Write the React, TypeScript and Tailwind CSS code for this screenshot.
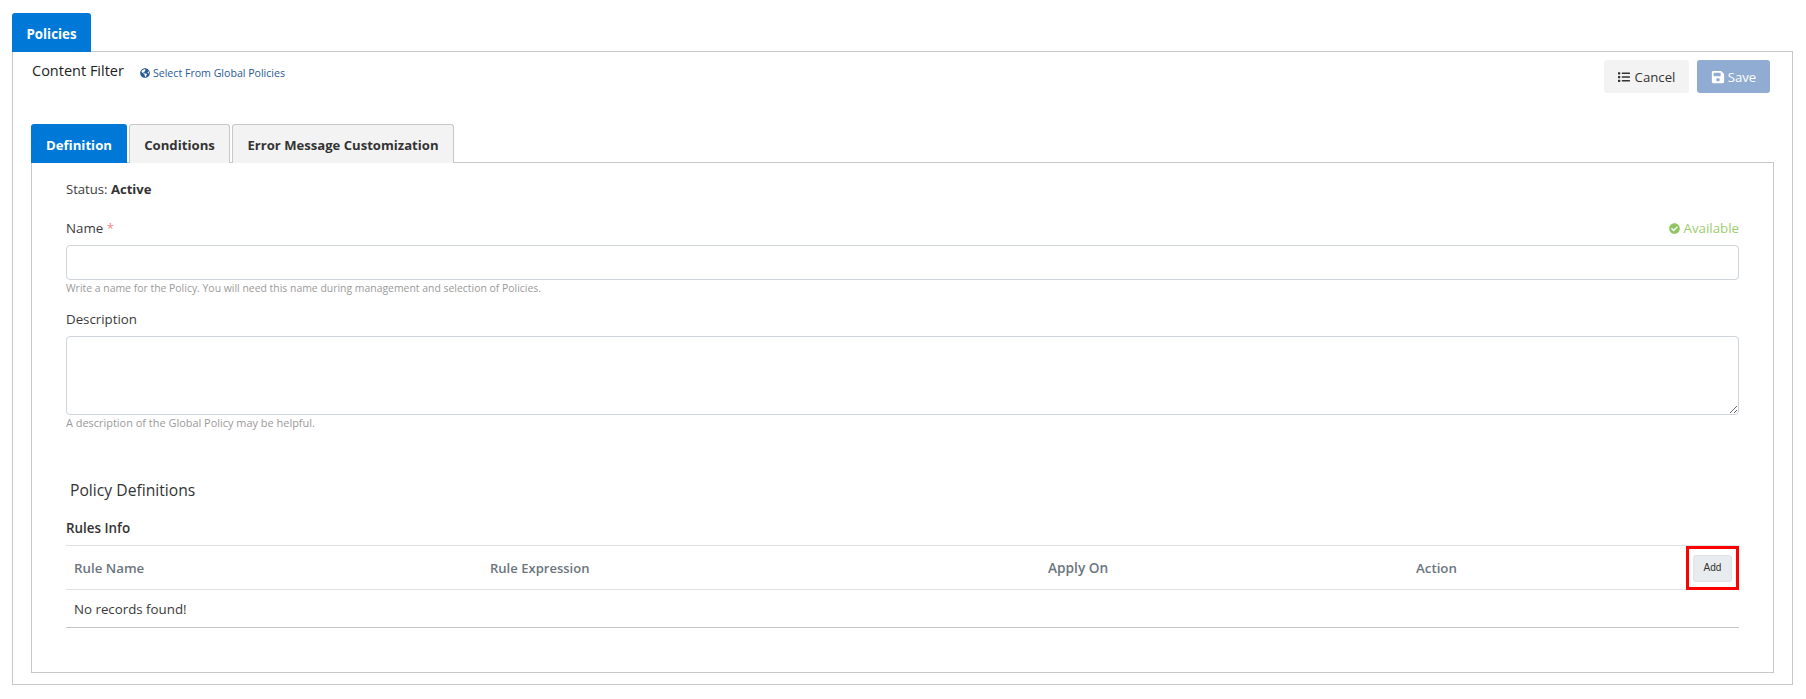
import React from "react";
import { FaList, FaSave, FaCheckCircle, FaGlobeAmericas } from "react-icons/fa";

export default function App() {
  return (
    <div className="min-h-[699px] bg-white pt-[13px] pl-[12px] pr-[13px] text-[14px] leading-[20px] text-[#3a3a3a] font-['Open_Sans',sans-serif]">
      <div className="relative z-10 -mb-[1px] flex">
        <div className="h-[39px] w-[79px] rounded-t-[3px] bg-[#0078d7] pt-[2px] flex items-center justify-center text-[13.3px] font-bold text-white">Policies</div>
      </div>
      <div className="h-[634px] border border-[#c8c8c8] pl-[18px] pr-[18px]">
        <div className="flex justify-between">
          <div className="flex items-start pt-[9px] pl-[1px]">
            <span className="text-[14.5px] leading-[20px] text-[#222]">Content Filter</span>
            <span className="ml-[16px] mt-[2px] flex items-center gap-[3px] text-[10.6px] leading-[20px] text-[#2a5a96]">
              <FaGlobeAmericas className="text-[10px] text-[#2a5a96]" />
              Select From Global Policies
            </span>
          </div>
          <div className="flex gap-[8px] pt-[8px] pr-[4px]">
            <div className="h-[33px] w-[85px] rounded-[3px] bg-[#f3f3f3] flex items-center justify-center gap-[5px] text-[13.2px] text-[#333]">
              <FaList className="text-[12px]" />
              Cancel
            </div>
            <div className="h-[33px] w-[73px] rounded-[3px] bg-[#91acd2] flex items-center justify-center gap-[3px] text-[13.2px] text-white">
              <FaSave className="text-[14px]" />
              Save
            </div>
          </div>
        </div>

        <div className="relative z-10 -mb-[1px] mt-[31px] flex gap-[2px] items-end">
          <div className="h-[39px] w-[96px] rounded-t-[3px] bg-[#0078d7] pt-[2px] flex items-center justify-center text-[13.2px] font-bold text-white">Definition</div>
          <div className="h-[39px] w-[101px] rounded-t-[3px] border border-b-0 border-[#c8c8c8] bg-[#f3f3f3] pt-[2px] flex items-center justify-center text-[13.2px] font-bold text-[#333]">Conditions</div>
          <div className="h-[39px] w-[222px] rounded-t-[3px] border border-b-0 border-[#c8c8c8] bg-[#f3f3f3] pt-[2px] flex items-center justify-center text-[13.1px] font-bold text-[#333]">Error Message Customization</div>
        </div>

        <div className="h-[511px] border border-[#c8c8c8] pl-[34px] pr-[34px] pt-[16px]">
          <div className="text-[13.1px] leading-[20px]">Status: <span className="font-bold text-[#333]">Active</span></div>

          <div className="mt-[19px] flex justify-between text-[13.3px] leading-[20px]">
            <span>Name <span className="text-[#f08a8a]">*</span></span>
            <span className="flex items-center gap-[4px] text-[#9ccc6e]"><FaCheckCircle className="text-[11px] text-[#8fc562]" />Available</span>
          </div>
          <div className="mt-[7px] h-[35px] rounded-[4px] border border-[#ced4da] bg-white"></div>
          <div className="mt-[1px] text-[10.43px] leading-[14px] text-[#9a9a9a]">Write a name for the Policy. You will need this name during management and selection of Policies.</div>

          <div className="mt-[14px] text-[13.3px] leading-[20px]">Description</div>
          <textarea readOnly className="mt-[7px] block h-[79px] w-full rounded-[4px] border border-[#ced4da] bg-white"></textarea>
          <div className="mt-[1px] text-[10.95px] leading-[14px] text-[#9a9a9a]">A description of the Global Policy may be helpful.</div>

          <div className="mt-[49px] pl-[4px] text-[15.7px] font-[500] leading-[22px] text-[#333]">Policy Definitions</div>
          <div className="mt-[18px] text-[13.4px] font-[600] leading-[18px] text-[#333]">Rules Info</div>

          <div className="mt-[8px] border-t border-[#dee2e6]">
            <div className="grid h-[44px] grid-cols-[424px_558px_368px_1fr] items-center border-b border-[#dee2e6] text-[13.3px] font-[600] text-[#6c757d]">
              <span className="pl-[8px]">Rule Name</span>
              <span className="text-[13.05px]">Rule Expression</span>
              <span className="text-[13.7px]">Apply On</span>
              <div className="flex h-[44px] items-center justify-between">
                <span>Action</span>
                <div className="flex h-[44px] w-[53px] items-center justify-center border-[3px] border-[#ff0000]">
                  <div className="flex h-[27px] w-[39px] items-center justify-center rounded-[3px] border border-[#dee2e6] bg-[#e9ecef] font-['Liberation_Sans',sans-serif] text-[10px] font-normal text-[#333]">Add</div>
                </div>
              </div>
            </div>
            <div className="flex h-[38px] items-center border-b border-[#c4c4c4] pl-[8px] text-[13.3px]">No records found!</div>
          </div>
        </div>
      </div>
    </div>
  );
}
